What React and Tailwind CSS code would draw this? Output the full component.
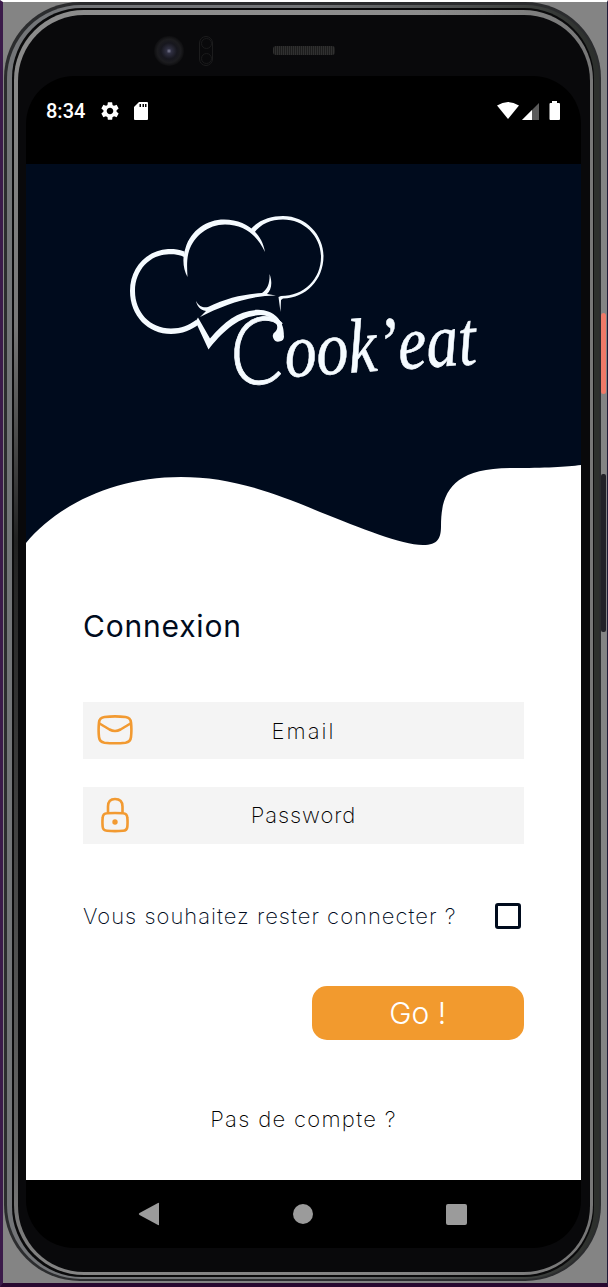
import React from "react";

function Logo() {
  return (
    <svg viewBox="120 205 370 210" className="ml-[94px] mt-[41px] block h-[210px] w-[370px] overflow-visible" fill="#f5fbff">
      {/* left puff */}
      <path d="M184.500 251.500C178 249 172 248.700 168 249C146 250.500 130 268 130 291C130 316 148 334 171 334C182 334 192 330 199 324L196 320C189 325 181 328.500 171 328.500C150 328.500 135 312 135 291C135 270 150 254.500 169 254.300C175 254 180 255 184 257Z" />
      {/* middle puff */}
      <path d="M187.500 277C183 269 182 258 185.500 248C191 230 207 219.500 224 219.500C246 219.500 262 233 265 252C257 235 244 224.500 225 224.500C208 224.500 194 236 189 251C186.500 259 187 268 187.500 277Z" />
      {/* right puff */}
      <path d="M250 230C258 220 271 216 283 216C306 216 323.500 235 323.500 256C323.500 280 306 298 283 298.500L281 300L280.500 312L278.500 297L281 296C304 296 321 279 321 257C321 236 304 219.500 283 219.500C271 219.500 261 223.500 254 233Z" />
      {/* brim */}
      <path d="M196 301C199 307 204 308 208 307C226 298 244 294 262 293C268 289 270 282 269.500 274C273 283 271 290 267 294L276 295.500C250 295.500 224 305 200 317L206 311C200 310 197 306 196 301Z" />
      {/* ribbon that runs into the initial */}
      <path d="M198 317.500L210 338.500C225 321 238 310.500 258 309.800C275 310 284.500 322 283.800 335A5.500 5.500 0 1 1 275.500 331.500C280 327 276 316 261 315C239 315.500 222 332 208.500 349.500L195.500 321.500Z" />
      <g transform="rotate(-4 240 380)">
        <text x="231" y="385.500" fontFamily="Lato, sans-serif" fontSize="94" fontWeight="300" fontStyle="italic" textLength="55" lengthAdjust="spacingAndGlyphs" stroke="#f5fbff" strokeWidth="0.8">C</text>
        <text x="286" y="380.500" fontFamily="'Liberation Serif', serif" fontStyle="italic" fontSize="77" textLength="192" lengthAdjust="spacingAndGlyphs" stroke="#f5fbff" strokeWidth="0.6">ook’eat</text>
      </g>
    </svg>
  );
}

function StatusBar() {
  return (
    <div className="flex h-[88px] items-start pl-5 pr-[20px] pt-[24px] text-white">
      <span className="-mt-px font-[Roboto] text-[20px] font-medium leading-[24px]">8:34</span>
      <svg viewBox="0 0 24 24" className="ml-[14px] mt-[0px] h-[22px] w-[22px]" fill="#fff">
        <path d="M19.140 12.940c.04-.3.060-.61.060-.94 0-.32-.02-.64-.07-.94l2.030-1.580a.49.49 0 0 0 .12-.61l-1.920-3.320a.488.488 0 0 0-.59-.22l-2.390.96c-.5-.38-1.030-.7-1.620-.94l-.36-2.540a.484.484 0 0 0-.48-.41h-3.840c-.24 0-.43.17-.47.41l-.36 2.540c-.59.24-1.130.57-1.620.94l-2.390-.96c-.22-.08-.47 0-.59.22L2.740 8.870c-.12.21-.08.47.12.61l2.030 1.580c-.05.3-.09.63-.09.94s.02.64.07.94l-2.030 1.580a.49.49 0 0 0-.12.61l1.920 3.320c.12.22.37.29.59.22l2.390-.96c.5.38 1.030.7 1.620.94l.36 2.540c.05.24.24.41.48.41h3.840c.24 0 .44-.17.47-.41l.36-2.540c.59-.24 1.130-.56 1.620-.94l2.390.96c.22.08.47 0 .59-.22l1.920-3.320c.12-.22.07-.47-.12-.61l-2.010-1.580zM12 15.600c-1.980 0-3.600-1.620-3.600-3.600s1.620-3.600 3.600-3.600 3.600 1.620 3.600 3.600-1.620 3.600-3.600 3.600z" />
      </svg>
      <svg viewBox="0 0 14 18" className="ml-[13px] mt-[2px] h-[18px] w-[14px]">
        <path d="M5 0H13Q14 0 14 1V17Q14 18 13 18H1Q0 18 0 17V5Z" fill="#fff" />
        <path d="M5.500 2H7V5H5.500ZM8.500 2H10V5H8.500ZM11 2H12.500V5H11Z" fill="#000" />
      </svg>
      <span className="flex-1" />
      <svg viewBox="0 0 64 20" className="mt-px h-5 w-16" fill="#fff">
        <path d="M0 4.500Q11 -2.500 22 4.500L11 18Z" />
        <path d="M42 2V19H25Z" fill="#5b5b5b" />
        <path d="M35 9V19H25Z" />
        <path d="M52.500 3Q52.500 2 53.500 2H55V0H60V2H62Q63 2 63 3V18Q63 19 62 19H53.500Q52.500 19 52.500 18Z" />
      </svg>
    </div>
  );
}

function Hero() {
  return (
    <div className="grid h-[386px]">
      <svg viewBox="0 0 555 386" className="col-start-1 row-start-1 h-[386px] w-[555px]">
        <path fill="#000b1d" d="M0 0H555V301C540 303 520 304 485 304C425 304 415 330 415 362C415 374 412 381 397 381C375 381 335 364 294 348C240 325 200 313 155 313C90 313 32 340 0 379Z" />
      </svg>
      <div className="col-start-1 row-start-1">
        <Logo />
      </div>
    </div>
  );
}

function Field({ icon, children }) {
  return (
    <div className="grid h-[56.5px] grid-cols-[64px_1fr_64px] items-center bg-[#f4f4f4]">
      <span className="flex justify-center">{icon}</span>
      <span className="text-center">{children}</span>
    </div>
  );
}

function MailIcon() {
  return (
    <svg viewBox="0 0 36 30" className="h-[30px] w-9" fill="none" stroke="#f29a31" strokeWidth="2.600" strokeLinecap="round" strokeLinejoin="round">
      <path d="M7.500 2Q18 .8 28.500 2Q33.500 2.500 34 7.500Q34.800 15 34 22Q33.500 27 28.500 27.700Q18 28.800 7.500 27.700Q2.500 27 2 22Q1.200 15 2 7.500Q2.500 2.500 7.500 2Z" />
      <path d="M2.500 8.500L12.500 14.500Q18 17.500 23.500 14.500L33.500 8.500" />
    </svg>
  );
}

function LockIcon() {
  return (
    <svg viewBox="0 0 28 36" className="h-9 w-7" fill="none" stroke="#f29a31" strokeWidth="2.600">
      <path d="M7 16V9.500Q7 2 14 2Q21.500 2 21.500 9.500V16" />
      <path d="M6 16.300Q14 15.600 22 16.300Q26 16.500 26.300 20.500Q26.800 25 26.300 30Q26 33.500 22 33.800Q14 34.500 6 33.800Q2 33.500 1.700 30Q1.200 25 1.700 20.500Q2 16.500 6 16.300Z" />
      <circle cx="14" cy="25" r="2.700" fill="#f29a31" stroke="none" />
    </svg>
  );
}

function Form() {
  return (
    <div className="flex h-[630px] flex-col px-[57px] text-black">
      <h1 className="mt-[58px] h-9 text-[30px] font-normal leading-9 tracking-[0.8px] text-[#000b1d]">Connexion</h1>
      <div className="mt-[58px] flex flex-col gap-[28.500px] text-[22px] font-extralight leading-7">
        <Field icon={<MailIcon />}><span className="relative top-px text-[22px] tracking-[2px]">Email</span></Field>
        <Field icon={<LockIcon />}><span className="tracking-[0.9px]">Password</span></Field>
      </div>
      <div className="mt-[58px] flex h-7 items-center justify-between whitespace-nowrap text-[22px] font-extralight leading-7 text-[#000b1d]">
        <span className="tracking-[1px]">Vous souhaitez rester connecter ?</span>
        <span className="mr-[3px] h-[26px] w-[26px] rounded-[3px] border-[3px] border-[#000b1d]" />
      </div>
      <button className="mt-[56px] h-[54px] w-[212.500px] self-end rounded-[15px] bg-[#f29a2e] pt-[2px] text-[30px] font-light text-white">Go !</button>
      <a className="mt-[65px] self-center text-[22px] font-extralight leading-7 tracking-[1.3px]">Pas de compte ?</a>
    </div>
  );
}

function NavBar() {
  return (
    <div className="flex h-[68px] items-center justify-between pl-[112px] pr-[114px]">
      <svg viewBox="0 0 22 24" className="h-6 w-[22px]" fill="#9b9b9b"><path d="M21 1.500V22.500Q21 23.500 20 23L1.500 13Q0 12 1.500 11L20 1Q21 .5 21 1.500Z" /></svg>
      <span className="h-5 w-5 rounded-full bg-[#9b9b9b]" />
      <span className="h-[21px] w-[21px] rounded-[2px] bg-[#9b9b9b]" />
    </div>
  );
}

function Bezel() {
  return (
    <div className="flex h-[61px] items-start">
      <span className="ml-[128px] mt-[21px] flex h-[30px] w-[30px] items-center justify-center rounded-full bg-[radial-gradient(circle,#7c7c94_0,#303042_12%,#17171e_38%,#1c1c1f_55%,#0e0e10_70%)]" />
      <span className="ml-[15px] mt-[21px] flex h-[30px] w-[14px] flex-col items-center justify-between rounded-full border border-[#1c1c1d] p-px">
        <span className="h-[11px] w-[11px] rounded-full border border-[#1a1a1b]" />
        <span className="h-[11px] w-[11px] rounded-full border border-[#1a1a1b]" />
      </span>
      <span className="ml-[60px] mt-[31px] h-[9px] w-[62px] rounded-[3px] bg-[repeating-linear-gradient(90deg,#303030_0_1px,#1d1d1d_1px_2px)]" />
    </div>
  );
}

export default function App() {
  return (
    <div className="relative h-[1287px] w-[608px] overflow-hidden border-b-4 border-l-[3px] border-r border-t-2 border-b-[#28082f] border-l-[#3b1b4a] border-r-[#201a38] border-t-white bg-[#848484] font-['Inter',sans-serif]">
      <span className="absolute left-[598px] top-[311px] h-[81px] w-[5px] rounded-[3px] bg-[#f07a68]" />
      <span className="absolute left-[598px] top-[472px] h-[158px] w-[5px] rounded-[2px] bg-[#222127]" />
      <div className="ml-px h-[1279px] w-[597px] rounded-[76px] bg-[#2b2c2e] pb-[2px] pl-[3px] pr-[2px] pt-[3px]">
        <div className="h-full rounded-[74px] bg-[linear-gradient(90deg,#737578_0,#737578_50%,#2d302d_99%)] pb-[2px] pl-[5px] pr-[5px] pt-[3px]">
          <div className="h-full rounded-[70px] bg-[#0a0a0b] pb-[2px] pl-[2px] pr-px pt-[2px]">
            <div className="h-full rounded-[70px] bg-[linear-gradient(90deg,transparent_70%,#777_99.5%),linear-gradient(180deg,#8d8d8d_0,#777_25%,#222_42%,#333_55%,#666_90%,#858585_100%)] pb-[3px] pl-[4px] pr-[3px] pt-[5px]">
              <div className="flex h-full flex-col rounded-[66px] bg-[#09090b] pl-[8px] pr-[9px]">
                <Bezel />
                <main className="h-[1172px] w-[555px] overflow-hidden rounded-[48px] bg-black">
                  <StatusBar />
                  <div className="bg-white">
                    <Hero />
                    <Form />
                  </div>
                  <NavBar />
                </main>
              </div>
            </div>
          </div>
        </div>
      </div>
    </div>
  );
}
